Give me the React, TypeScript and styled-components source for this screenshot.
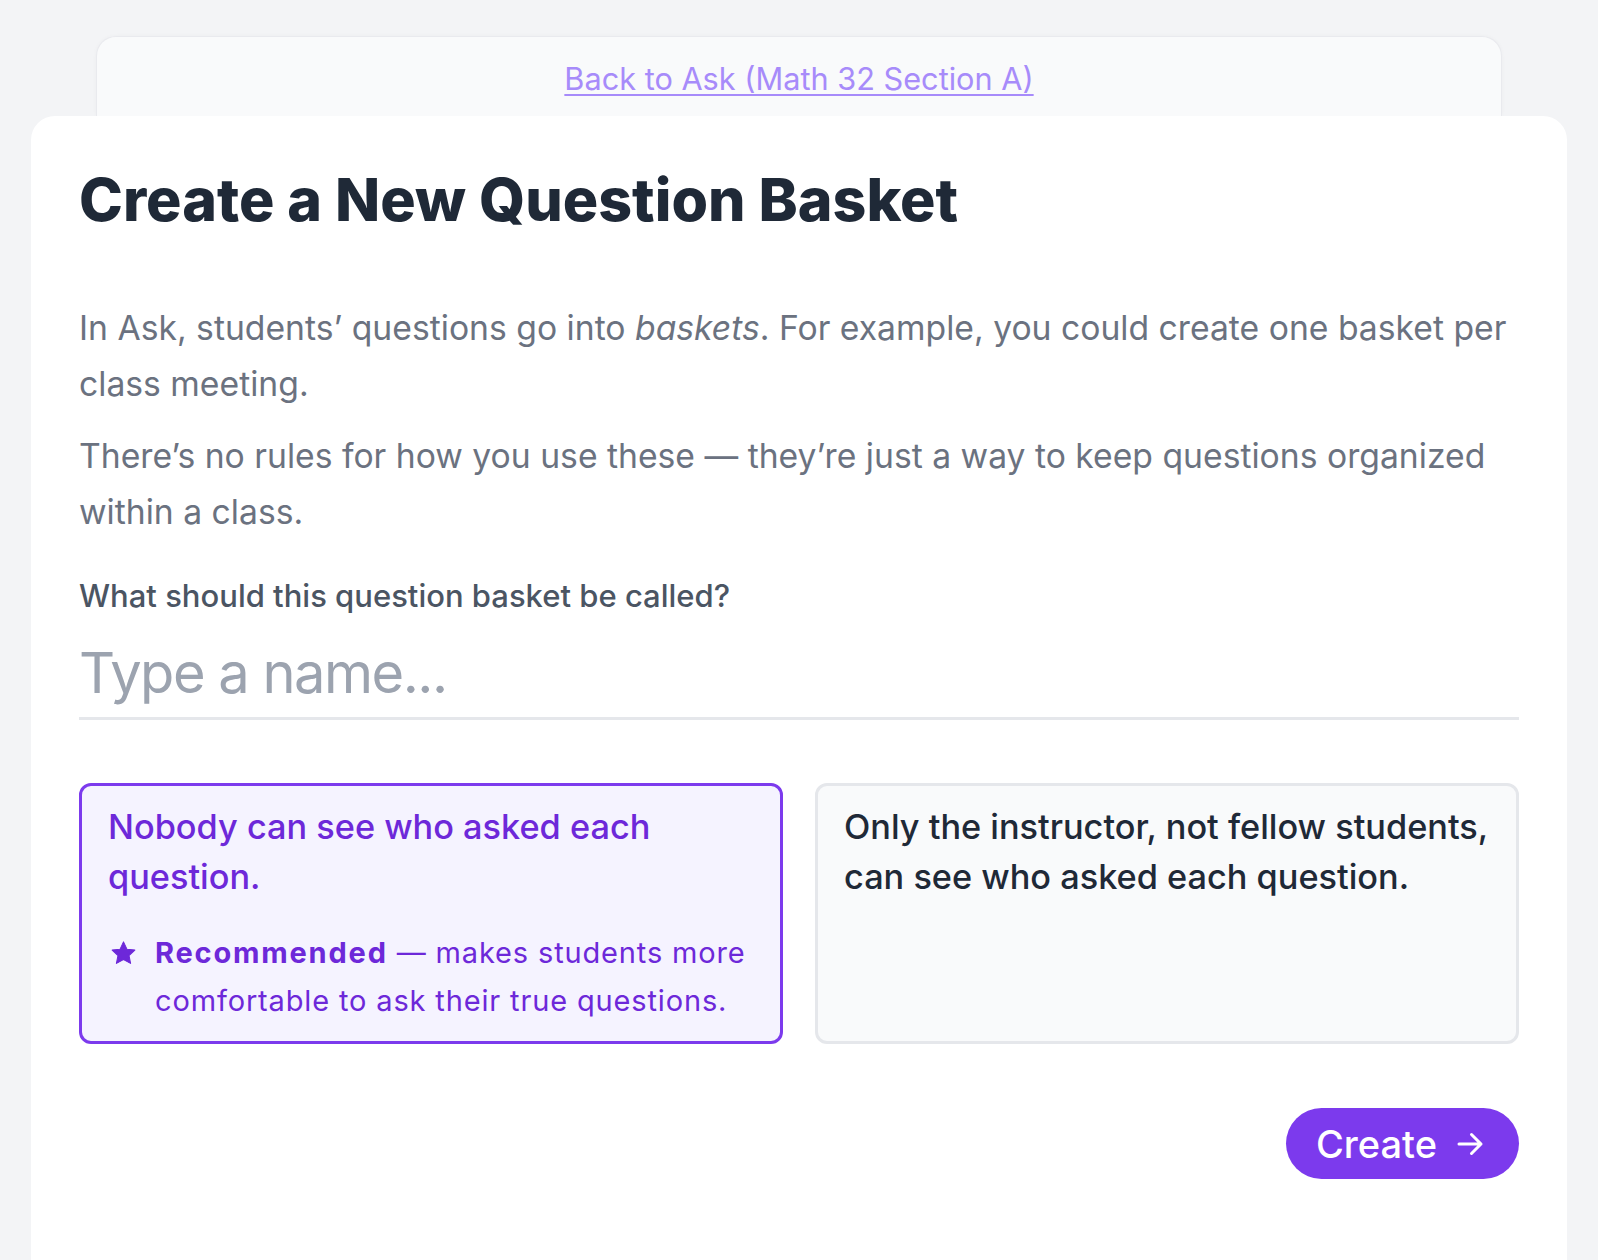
import React from "react";
import styled, { createGlobalStyle } from "styled-components";

const Global = createGlobalStyle`
  html, body { margin: 0; padding: 0; background: #f3f4f6; }
  body { font-family: Inter, "Noto Sans", sans-serif; -webkit-font-smoothing: antialiased; }
  * { box-sizing: border-box; }
`;

const Page = styled.div`
  min-height: 100vh;
  padding: 36px 31px 0;
  display: flex;
  flex-direction: column;
`;

const BackTab = styled.div`
  margin: 0 65px;
  height: 80px;
  padding-top: 21px;
  display: flex;
  justify-content: center;
  background: #f9fafb;
  border: 1px solid #e9eaee;
  border-bottom: none;
  border-radius: 20px 20px 0 0;
  box-shadow: 0 0 4px rgba(0, 0, 0, 0.03);
`;

const BackLink = styled.a`
  font-size: 30.7px;
  line-height: 42px;
  color: #a78bfa;
  text-decoration: underline;
  text-underline-offset: 4px;
  text-decoration-thickness: 2px;
  cursor: pointer;
`;

const Card = styled.main`
  flex: 1;
  background: #ffffff;
  border-radius: 24px 24px 0 0;
  padding: 50px 48px 48px;
  display: flex;
  flex-direction: column;
`;

const Title = styled.h1`
  margin: 0 0 66px;
  font-size: 59.1px;
  line-height: 68px;
  font-weight: 800;
  color: #1f2937;
`;

const Para = styled.p`
  margin: 0 0 16px;
  font-size: 33.7px;
  line-height: 56px;
  color: #6b7280;
  em { font-style: italic; }
`;

const Label = styled.label`
  display: block;
  margin-top: 22px;
  font-size: 31px;
  line-height: 36px;
  font-weight: 500;
  color: #4b5563;
`;

const NameInput = styled.input`
  display: block;
  width: 100%;
  margin-top: 23px;
  border: none;
  border-bottom: 3px solid #e5e7eb;
  outline: none;
  padding: 0 0 8px;
  height: 83px;
  font-family: inherit;
  font-size: 56px;
  letter-spacing: -1.5px;
  line-height: 72px;
  color: #1f2937;
  background: transparent;
  &::placeholder { color: #9ca3af; }
`;

const Options = styled.div`
  margin-top: 63px;
  display: grid;
  grid-template-columns: 1fr 1fr;
  gap: 32px;
`;

const Option = styled.div<{ $selected?: boolean }>`
  border: 3px solid ${(p) => (p.$selected ? "#7c3aed" : "#e5e7eb")};
  background: ${(p) => (p.$selected ? "#f5f3ff" : "#f9fafb")};
  border-radius: 12px;
  padding: 16px 24px 16px 26px;
  cursor: pointer;
`;

const OptionText = styled.div<{ $selected?: boolean }>`
  font-size: 34.3px;
  line-height: 50px;
  font-weight: 500;
  color: ${(p) => (p.$selected ? "#6d28d9" : "#1f2937")};
`;

const Note = styled.div`
  margin-top: 27px;
  display: flex;
  align-items: flex-start;
  gap: 19px;
  color: #6d28d9;
  font-size: 29px;
  letter-spacing: 0.85px;
  line-height: 48px;
  b { font-weight: 700; letter-spacing: 1.8px; }
`;

const StarWrap = styled.span`
  flex: none;
  margin-left: 3px;
  width: 25px;
  height: 48px;
  display: flex;
  align-items: center;
`;

const Footer = styled.div`
  margin-top: 64px;
  display: flex;
  justify-content: flex-end;
`;

const CreateButton = styled.button`
  height: 71px;
  padding: 0 35px 0 30px;
  border: none;
  border-radius: 999px;
  background: #7c3aed;
  color: #ffffff;
  font-family: inherit;
  font-size: 38px;
  font-weight: 500;
  display: flex;
  align-items: center;
  gap: 20px;
  cursor: pointer;
`;

const Star = () => (
  <svg width="25" height="24" viewBox="0 0 24 23" aria-hidden="true">
    <path
      d="M12 0.8l3.3 7 7.6.9-5.6 5.2 1.5 7.6L12 17.7l-6.8 3.8 1.5-7.6L1.1 8.7l7.6-.9z"
      fill="#6d28d9"
      stroke="#6d28d9"
      strokeWidth="1"
      strokeLinejoin="round"
    />
  </svg>
);

const Arrow = () => (
  <svg width="27" height="24" viewBox="0 0 27 24" fill="none" aria-hidden="true">
    <path d="M2 12h22M14.5 2.5 24 12l-9.5 9.5" stroke="#fff" strokeWidth="3" strokeLinecap="round" strokeLinejoin="round" />
  </svg>
);

export default function App() {
  return (
    <>
      <Global />
      <Page>
        <BackTab>
          <BackLink>Back to Ask (Math 32 Section A)</BackLink>
        </BackTab>
        <Card>
          <Title>Create a New Question Basket</Title>
          <Para>
            In Ask, students’ questions go into <em>baskets</em>. For example, you could create one basket per class meeting.
          </Para>
          <Para>
            There’s no rules for how you use these — they’re just a way to keep questions organized within a class.
          </Para>
          <Label htmlFor="basket-name">What should this question basket be called?</Label>
          <NameInput id="basket-name" placeholder="Type a name..." />
          <Options>
            <Option $selected>
              <OptionText $selected>Nobody can see who asked each question.</OptionText>
              <Note>
                <StarWrap>
                  <Star />
                </StarWrap>
                <span>
                  <b>Recommended</b> — makes students more comfortable to ask their true questions.
                </span>
              </Note>
            </Option>
            <Option>
              <OptionText>Only the instructor, not fellow students, can see who asked each question.</OptionText>
            </Option>
          </Options>
          <Footer>
            <CreateButton>
              Create
              <Arrow />
            </CreateButton>
          </Footer>
        </Card>
      </Page>
    </>
  );
}
